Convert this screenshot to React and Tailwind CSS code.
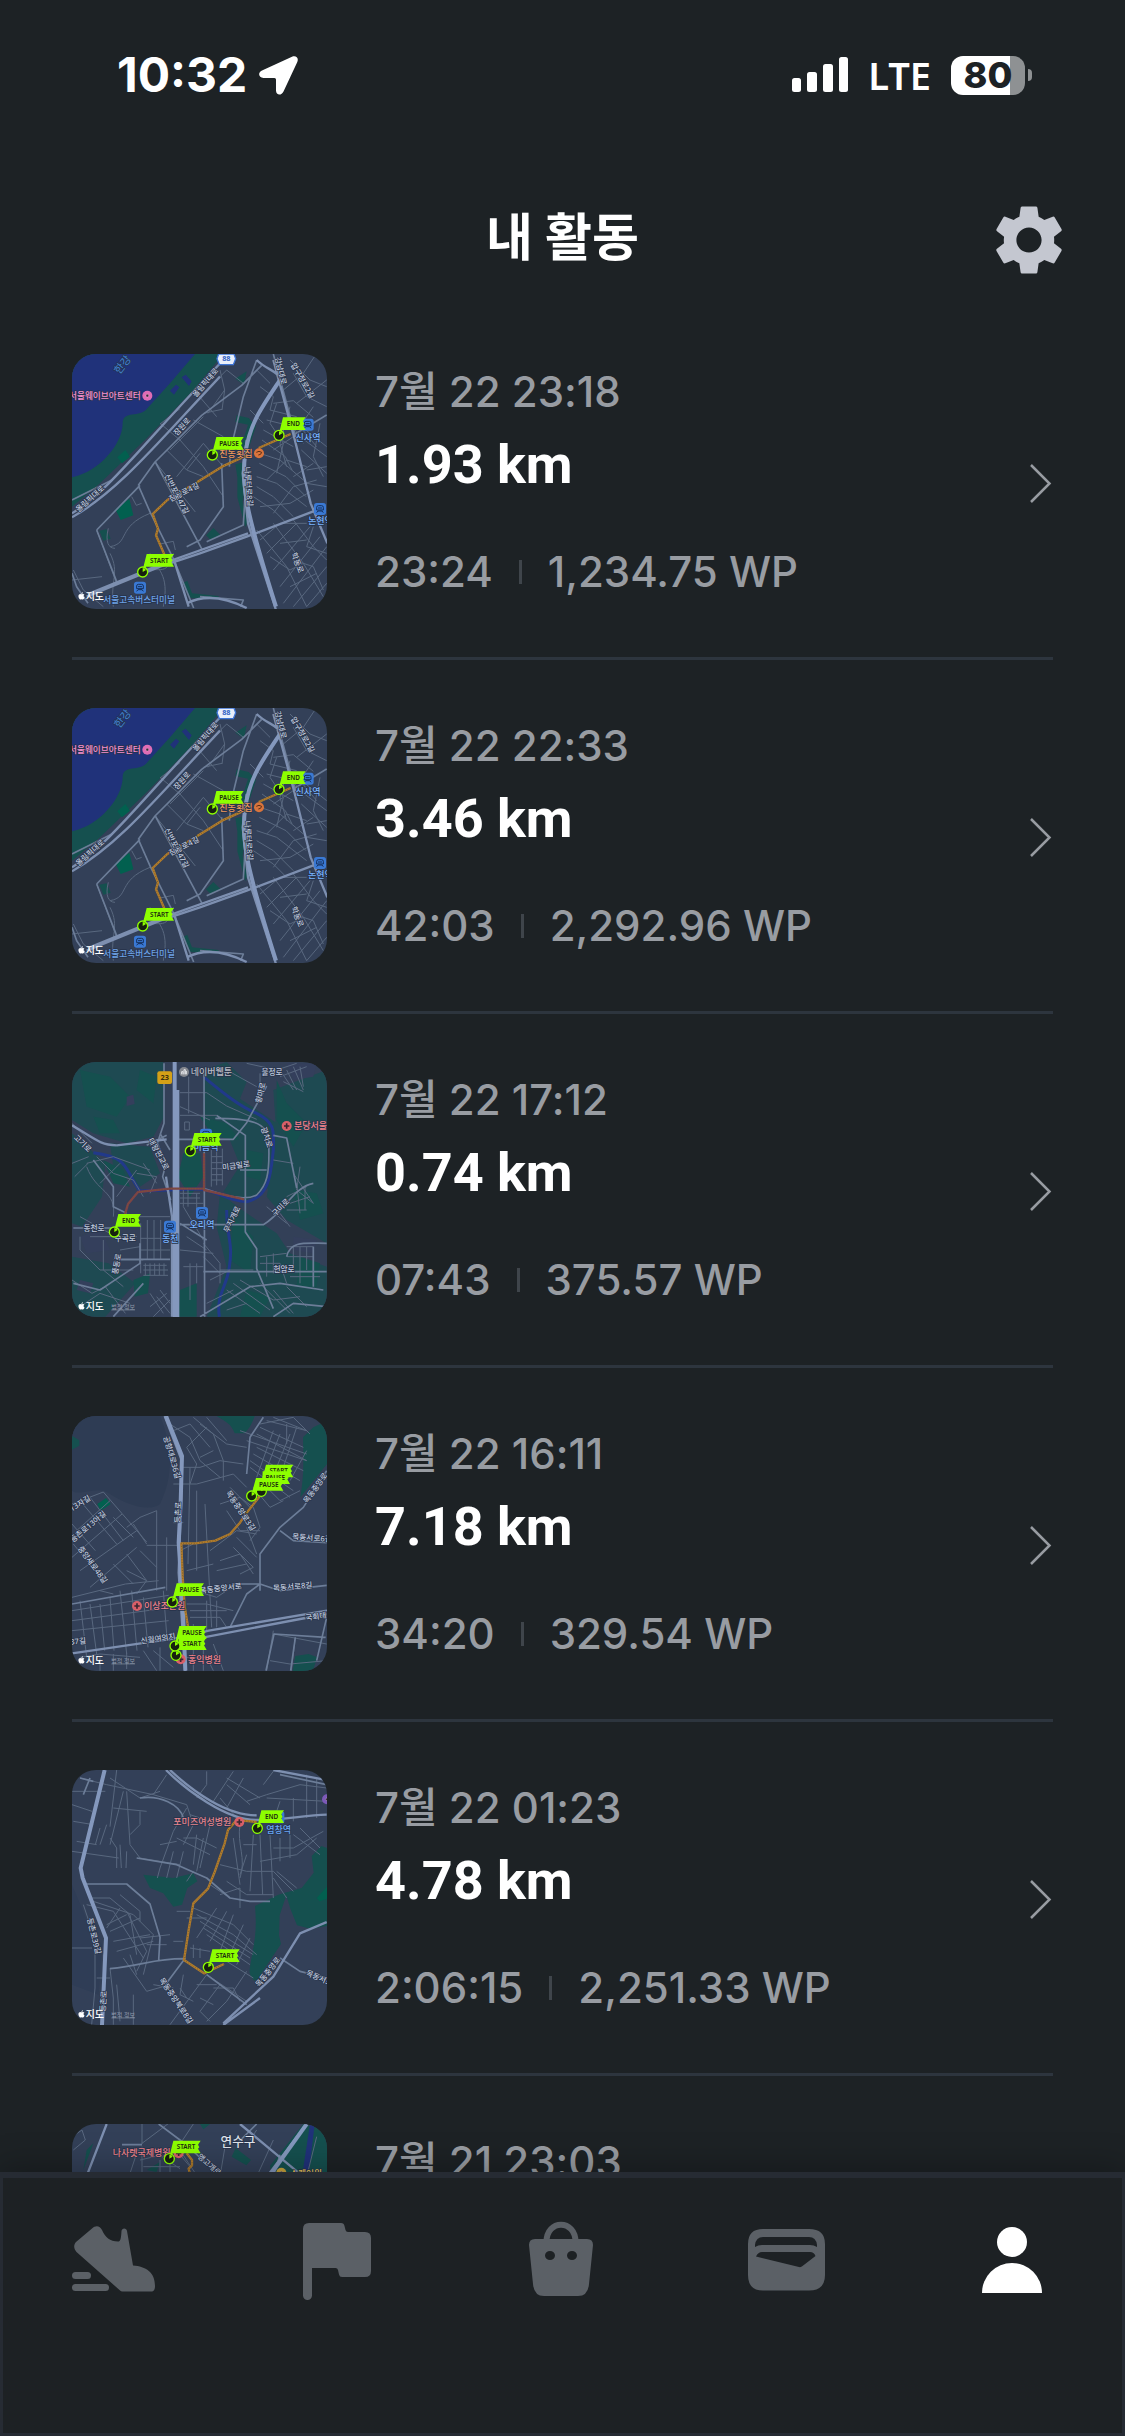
import { FaApple } from "react-icons/fa";
import { MdSettings } from "react-icons/md";

const PARK = "#15504f";
const PARK_BRIGHT = "#02604f";
const WATER = "#20327a";

// Map thumbnails, drawn on a 765 unit square. Flags are [x, y, label] of the pin.
const GANGNAM = {
  box: "36 42 765 765",
  areas: [
    { fill: PARK, d: "M36 42H490L400 150L260 295L120 430L36 500Z" },
    { fill: WATER, d: "M36 42H405L330 130L262 205C240 235 188 210 188 250C188 310 120 395 36 412Z" },
    { fill: WATER, d: "M330 152l18-18 10 8-16 22zM365 112l12-8 18 20-8 14z" },
    { fill: PARK_BRIGHT, d: "M172 352l24-22 14 20-24 20zM166 508l42-32 12 50-38 14z" },
    { fill: PARK, d: "M526 116l34-22-8 40zM530 226l36 8 22 24-22 68-22-8 20-64-38-8zM490 380l66-14v60l-8 60 14 60-6 16-24-90v-60l-6-40zM118 572l22-4 12 28-22 6zM438 586l22-22 22 22-30 14zM368 730l14-8 14 38 80 8v10l-84-4z" },
  ],
  minor:
    "M300 250l60 50 70 80 60 90M360 206l-60 46M410 160l60 70M480 90l14 60-50 70M494 150l-8 60M430 220l56-12M360 300l70-70M330 330l60-60M286 366l120 150M320 330l60 60 40-50M380 390l50 20M350 410l80-100 60 70M400 240l90 50M110 570l60 160M150 620c60-10 20-60 120-100M165 625c-20 0-30-20-20-60M300 612l40-8 6 26M215 470l14 26 16-6M470 120l30-30 50 40M250 700c40-30 70 20 90-60M40 690l30 60 60 50M36 720l90-10M150 640c30 60 0 80 10 160M270 640c20 50 60 60 40 160" +
    "M640 190l60-8 60 50M630 210l80 20M620 240l80 20 30 50M610 270l90 50M606 300l70 50 20 40M600 340l60 20 70 60M598 370l80 40 60 60M590 410l60 20 90 70M590 440l50 30 60 60M580 470l60 40 40 40M690 60l60 60 50 20M700 100l40 70 60 30M670 150l60-50 40-60M710 190l90-70M700 240l100 80M720 290l80 60M724 330l76 70M650 190l-20 60 40 60-20 90M690 200l-30 110 20 70M640 330l60-40M620 420l60-60 60 20M640 520l60-80 70-20M600 500l90-10 70-40M760 200l-40 60 50 60M780 250l-20 100 30 60M740 390l60-10M740 430l60 10M700 410l60-40" +
    "M600 600l60-50 80 0M620 640l90-90M640 690l110-130M660 740l120-150M670 790l130-170M700 800l100-120M740 800l60-70M590 570l90 110 60 120M640 550l90 120 60 100M700 540l60 80 40 40M660 610l80-10M630 650l60 40 40-20M700 660l60 20 30 70M600 140l40 30-10 40M590 90l40 40M570 210l40 40M760 560l-20 60 60 20M690 740l80-40",
  mid: "M590 60l-40 110-36 150-6 60M485 370l5 130-70 100-40 20M286 366l140 262M36 480l120-60M110 570l130-134M235 436l50-70 140-140 120-90 60-60M235 436l36 82 70 140 60 146M170 725l-60-155M36 700l14 40 34 50M440 605l110-50 10-170M420 770l130 10-8 20M640 42l70 260M700 285l100-60",
  major: "M36 520C150 450 240 320 490 60M36 532C180 450 300 300 480 110M80 770L300 680L420 640L560 590L760 514M84 762l220-90 260-92M342 660l44 140M380 790c60-30 120-16 180 14M560 300l-12 100 16 150 84 260M640 60l62 230 50 200 50 120M590 60c30 30 60 30 76 60",
  trunk: "M660 120c-60 90-90 130-104 220-16 100 10 200 92 460",
  route: "M692 282l-96 42M560 346l-74 34-80 50-84 50-44 42 16 44-6 20 26 60",
  flags: [[248, 696, "START"], [457, 345, "PAUSE"], [657, 286, "END"]],
  roads: [
    [436, 128, -50, "올림픽대로"], [90, 476, -42, "올림픽대로"], [366, 260, -48, "잠원로"], [372, 456, -27, "잠원로4길"],
    [350, 462, 62, "신반포로47길"], [566, 440, 86, "나루터로8길"], [662, 92, 76, "강남대로"], [728, 122, 60, "압구정로2길"], [712, 668, 68, "학동로"],
  ],
  places: [
    [242, 176, "서울웨이브아트센터", "#f48fd0", 26, "end"], [478, 350, "진동횟집", "#ef995c", 27, "start"],
    [130, 788, "서울고속버스터미널", "#6ea2e6", 26, "start"], [744, 302, "신사역", "#79b4ff", 27, "middle"], [744, 553, "논현역", "#79b4ff", 27, "start"],
    [190, 84, "한강", "#3c7ac9", 32, "middle"],
  ],
  dots: [[262, 167, "#e06db5", "o"], [597, 340, "#d9743c", "~"]],
  stations: [[743, 254], [780, 507], [240, 743]],
  shield: [499, 56, "88"],
};

const BUNDANG = {
  box: "36 36 765 765",
  areas: [
    { fill: "#1e4a52", d: "M36 36H310L312 200L280 260L200 280L100 250L36 210ZM36 250l100 90-10 100-60 90-30-10ZM500 36l60 60-20 50 120 80-20 180-90 50-60-30 50-80-40-100-70-30V60ZM640 120l160-60v520l-120-70-60-70 30-170ZM480 430l80 60 90 60 40 60 110 40v150H440l60-150-30-120ZM36 620l110 20 80 60-90 100H36ZM150 280l120 10 30 80-60 40-80-60Z" },
    { fill: PARK, d: "M60 60l90 20 60 60-40 60-90-30zM370 310l50 0 10 70-40 60-36-60zM360 720l50-20v100h-54zM220 690l50-20-6 60-40 10zM650 90l30 70 60 60-40 70-50-80zM520 500l60 60-10 110-60-40zM720 620l60 20-10 70-60 0zM560 720l70 20-30 60h-60zM130 330l60 30 20 50-50-10zM420 200l80 20 40 50-80-10zM100 200l60 10 20 40-60 0zM700 420l70 10 20 60-70 20zM240 60l50 20-10 80-50-40zM560 300l50 10-10 80-40-10z" },
    { fill: "#343f5c", d: "M680 40h90l-10 40-60 10zM200 140l20-6 4 28-24 6zM60 560l60-20 30 60-70 10zM700 560l70 10-10 40-60-10zM60 690l40 10-10 30-40-10z" },
  ],
  rivers: "M430 80c60 50 110 90 160 110 60 30 50 60 50 110-8 70-10 140-80 155-70-5-100-40-150-38l-170 6c-50-70-30-100-140-115M500 480c0 80 20 100 8 170-6 60-40 80-30 150",
  minor:
    "M80 340l80-20 110 40M110 320l50 50 60 20 30 50M80 350c30 80 90 70 80 150M120 400l60-60M170 440l60-80M230 370l60 10-20 50M250 340l40 60M60 560l0 40 60 60 100 0M90 560h140M130 570v90l60 50M180 600l60-10M160 630l90 0M60 500l90 50M44 380l40-40M36 340l50-20" +
    "M360 128h80l60 40 90 40M360 196h110M374 216h14v24h-14zM386 80v110M360 170l90 40M454 300v110M470 300v106M487 296v110M454 320h34M454 338h34M454 356h34M454 374h34M454 390h34M360 430h60M360 444h60M370 420v50l60 100M384 420v50M410 430v60M360 460h70" +
    "M240 500h90M242 520v150M262 510v120M282 510v120M302 510v120M240 565h90M240 600h90M250 646h70M256 640v36M270 640v36M284 640v36M298 640v36M312 640v36M250 660h74M250 676h74M36 690l60 40 40-20 60 80M60 770l60-40 90 30M270 770l50-40M280 800l50-50M290 740l40 50M270 730l40 60M300 720l30 40" +
    "M660 80l80-30M670 95l60 30M680 60l30 60M700 50l30 70M720 50l10 60M660 60l40 60M36 220l60 60M500 60l90 50M560 40l90 20 60-20M600 70v60" +
    "M700 370l60 90M720 350l-10 70 50 40M680 440l60-30M690 460l60-20M680 480l60 0M710 400l10 90M735 410l0 70M640 330l60 10M620 470l60 50M660 490l30 40M680 590h80v110M700 590v60M720 590v110M680 620h80M690 680h90M740 590v70M600 620l80-10M600 640l60 0 20 60M620 620v60M640 610v60" +
    "M500 720l100 70M520 700l110 80M540 690l100 60 80-10M600 700l90 90M640 720l60 70M680 710l60 60M480 660h100M430 580l50 60 0 60M380 560l60 40M360 600l100 10M370 650h60M390 640v110M410 640v60M450 690l60-30M430 620l50 50M440 760l80-40M500 780l60-20",
  mid: "M312 40v180l-20 60 26 60-10 40 24 70M432 60l2 740M350 268h170l40-50 60-110M470 196l86 60v290l34 50v60l50 120M320 256l-60 30M300 250l30 50M430 415c60 20 120 40 160 20 30-30 40-60 36-160 0-60-60-70-160-70M640 256l40 8 30 150M760 400c-60 10-90 90-150 124H360M360 520l80 50M540 360h80M40 534h120M100 330l60 80v60l40 20M40 700l80 20 60-40 60-40 0-60M180 628h150M430 665h370M160 800l90-100M420 800l150-90 90-10 130 20M640 800l60-40 100 10M680 620c10-50 60-40 120-40M760 590v120",
  major: "M36 226C110 270 120 284 170 286M170 286l150-18M318 380l18 120v300",
  trunk: "M344 36v765M352 120v681",
  routeColor: "#7d4048",
  route: "M432 310v110l120 28M432 416H330l-96 10-30 36-10 34",
  flags: [[391, 303, "START"], [163, 546, "END"]],
  roads: [
    [636, 68, 0, "불정로"], [602, 128, -76, "황마로"], [620, 262, 72, "광치로"], [68, 280, 44, "고기로"], [296, 312, 62, "대왕판교로"], [528, 347, -8, "미금일로"],
    [662, 472, -45, "구미로"], [516, 508, -64, "무지개로"], [102, 534, 0, "동천로"], [196, 564, 0, "수곡로"], [170, 642, -80, "풍동로"], [672, 658, 0, "헌암로"],
  ],
  places: [
    [392, 75, "네이버웹툰", "#b8bbc4", 27, "start"], [702, 238, "분당서울대병원", "#f0838a", 27, "start"], [438, 300, "미금역", "#79b4ff", 27, "middle"],
    [426, 534, "오리역", "#79b4ff", 27, "middle"], [331, 576, "동천", "#79b4ff", 27, "middle"],
  ],
  dots: [[372, 66, "#85888f", "n"], [680, 228, "#d85f68", "+"]],
  stations: [[438, 254], [426, 489], [330, 530]],
  sign: [314, 82, "23"],
  legal: true,
};

const MOKDONG = {
  box: "36 36 765 765",
  areas: [
    { fill: "#2e3c54", d: "M36 36H300C340 130 340 220 300 300C260 330 180 290 150 270C110 240 60 280 36 260Z" },
    { fill: PARK, d: "M470 36h114c-10 30-20 40-30 52h-30c-10-30-30-36-54-52zM760 70l41-20v130l-80 100c10-60 10-100 8-180zM36 95l22 14v16l-22 12zM706 756l40-6 26 10-14 41h-60z" },
    { fill: PARK_BRIGHT, d: "M112 300l26-18 14 18-30 20z" },
  ],
  minor:
    "M36 300l94-36 130 150M50 380l100-90M36 460l150-130M60 500l170-120M90 550l140-120M60 290l110 130M90 280l100 130M36 360l70 80M40 420l90 110M120 560l40 10M160 480l60 60M200 450l60 80M240 440l50 50M160 340l60 60M200 370l40-30 50-20M36 580l160-40 100-10M220 360l40 60M36 620l290-46M36 650l300-40M36 680l290-30M60 590l20 170M90 600l20 150M120 600l14 140M150 580l12 160M180 560l20 190M215 560l16 180M250 580l14 150M290 320v240M320 400v160M260 424h100M310 560l10 130M200 500l60 30-30 40" +
    "M340 80l50-20 60 70M330 60l60 40 30 70 60 50M380 130l60-60M380 130l30 50-20 60M420 160l40-20M400 40l60 50 30 80v60M440 40l60 70M420 60l80 60 60 10M360 190h60l60-20 70 10M340 240l70 0 110-30 40 40M410 260v240M435 300l20 370M390 190l-6 290M340 356h30M360 440l40-20M480 300l60-20 40 30 20 60-30 40M500 320l40 60 60 0M510 250l60 60M520 430l60 60-40 20M450 440l80-60 60 10M480 470l60-20 40 60M530 400l60 60M560 370l30 80M470 500l90-20M380 500l80-20M370 550l100 30 60-40" +
    "M560 110l180 60M540 80l200 70M590 90l150 80M600 70l130 60M590 130l140 70M580 150l140 80M570 170l130 90M570 190l120 90M600 60l100-20 50 50M620 50l120 30M640 40l100 40M680 60v60M710 70l-60 180M690 90l-60 150M660 90l-50 130M640 80l-50 140M740 140l-50 90M580 250l50 60 40-20M600 230l60 60 60-30" +
    "M380 600l60 0 80 20M390 620h110M390 640l90 0 20 30M400 660v30M440 590v90M470 590v80M380 760l60 0 20 40M400 720v80M430 720v80M460 720l30 80M250 740l40 60M60 760l60-10 120 10M280 740l60 50M300 730v70M160 750v50M200 745v50M120 760v40M640 680l-20 120M706 700l-12 100M640 690l160 30M630 770l60 10 110-10",
  mid: "M610 40l-40 60-10 110M600 560v-110l60-80 70-60 70-110M600 540l-40 30-30 60-20 40M660 380l40 30 100 6M520 540h80l60 20 140-16M618 800l24-110 155 10M706 700l-14 100M800 640l-30 130M36 600l280-50",
  major: "M314 36l50 130v100l-8 240 20 295M36 748l330-48 80-20 355-60M400 706l400-76",
  trunk: "M318 36l48 120-4 140-6 120 12 180 8 204",
  route: "M600 276l-40 50-20 30-30 34-44 20-60 8-42 0 4 100 6 90 10 60",
  flags: [[600, 256, "START"], [604, 262, "PAUSE"], [575, 276, "PAUSE"], [337, 594, "PAUSE"], [348, 754, "START"], [345, 726, "PAUSE"]],
  flagTops: [[612, 182], [602, 202], [582, 222], [344, 538], [352, 700], [352, 666]],
  roads: [
    [336, 160, 74, "공항대로36길"], [354, 325, -88, "등촌로"], [542, 320, 56, "목동중앙로3길"], [766, 252, -54, "목동중앙로"], [756, 402, 4, "목동서로6길"], [698, 548, -5, "목동서로8길"],
    [482, 553, -7, "목동중앙서로"], [778, 636, -8, "국회대로"], [60, 298, -32, "13자길"], [84, 368, -40, "등촌로13아길"], [98, 482, 54, "중앙새로48길"], [294, 704, -8, "신월여의지"], [54, 712, -6, "37길"],
  ],
  places: [[252, 616, "이상조은원", "#f0838a", 27, "start"], [384, 776, "홍익병원", "#f0838a", 27, "start"]],
  dots: [[231, 606, "#d85f68", "+"], [362, 766, "#d85f68", "+"]],
  stations: [],
  legal: true,
};

const YEOMCHANG = {
  box: "36 36 765 765",
  areas: [
    { fill: PARK, d: "M250 350l90 10 60-14 12 24-30 20-16 50-26 6-30-40-40-16zM784 264l17 6v234l-50 8-40-10-20-50-12-40-20 60-2 60 6 26-40 60-30 46-10 4c-10-10-16-20-14-34 10-70 24-100 16-190l70-34 70-20 36-46-6-50z" },
    { fill: PARK_BRIGHT, d: "M770 420l31-34v36l-22 8z" },
    { fill: "#2f3d56", d: "M36 380l50 120 40 60-10 150-80-30z" },
  ],
  minor:
    "M36 100h100M60 60l80 20 140 30 40-60M36 140l60 20M40 190l60 10M50 250l60 10M36 280l140 20M150 60l90 60 60-20M170 36l-20 170M190 100l-40 160M160 150l100 10M140 200l-20 60M120 210l-14 50M200 100l10 160 30 40 120 20M240 160v40l-30 30M150 240l20 30 0 60M180 260l4 70M200 280l-2 50M280 110l100 30 20 60-30 60M380 150l-40 70-40 110M390 170l90 30M370 240l40 0 60 30M300 260l50-10M350 240l100 50M410 230l-10 90M430 240l-20 100M450 200l-30 130M340 280l-20 80M370 280l-20 80M400 340l-20 30M300 330l-8 30" +
    "M440 40v40l-30 40M480 120l50 60M500 80l70 60M520 40l-60 90M550 60l-50 90M500 60l100 60M560 130l60-20 100-30 80 10M640 40l-30 40M620 120l180 10M660 130l-20 60M700 120v70M740 50v130M770 60v120M600 230l8 180M630 230l10 190M580 230l-10 170M640 270h60l90-50M660 240v70M690 230l0 70M550 260h40M540 200c-10 60 20 100 0 160M560 290l-20 60M520 240l20 140M480 320l80 20 80 0 60 60M500 370l60 40 80 0M640 360l40 60M650 340l60 50M600 310l110-20 60-50M480 410l60-20 0 60M700 230l80 60M720 210l60 60M450 380l60 40" +
    "M90 420l60 0 60 50 20 120M80 440l80 20 90 140M70 440l20 60M100 430l120 40 60 60-30 120M180 450l-40 60M140 500l60-30M150 520l90-40M160 550l110-20M170 580l110-30M200 460l60 120-30 60M180 410l60 50 0 30M240 540l90-10M260 560l60 0M280 680l60 10M260 700l70-20M190 600l70 100M210 590l20 60M105 560v130l-10 110M150 630l10 90v80M130 590v60M36 570h60M110 660h40M170 680l10 110M220 710v90" +
    "M400 450l120 50 60 60M410 470l110 60 70 60M420 490l160 100M430 510l140 90M440 530l130 90M440 480l-60 0M520 470l-40 110M550 500l-50 110M500 460l-50 90M570 540l-40 80M470 450l-60 90M500 610l80 50M390 570l60 10M400 560v40M420 570v30M350 460h40M340 550h30M440 650l-110 150M440 650l120 80M480 680l-60 80 30 30M460 690l60 0 20 40M410 680l60 0M420 720l40 20M360 690l20 30M370 650l-10 60 40 20M560 640l-60 90-60 60",
  mid: "M240 120c60-10 120 20 130 60M60 60L100 70M80 378h120l70 60 30 100-4 70M150 632c100-10 130-30 220-30M440 650l120 90M316 680l60-80M230 300l120 20 90 40 70 60 60 10h60M660 600l60 40 80 20M660 50l140 30M90 60l-20 50",
  major: "M600 720l-110 81M490 796l150-140 80-130 80-34M318 36c60 60 180 150 270 150 90 0 140-14 212-16M330 36c70 66 170 136 260 136M640 36l160 30",
  trunk: "M134 36L62 330l6 30 70 180-12 261",
  route: "M590 192l-60-6-26 30-10 40-30 86-20 50-44 44-14 80-14 90 60 40 60-28",
  flags: [[592, 211, "END"], [445, 628, "START"]],
  roads: [[102, 534, 76, "등촌로39길"], [348, 728, 56, "목동중앙북로8길"], [624, 642, -52, "목동중앙로"], [778, 660, 24, "목동서로"], [130, 730, -86, "등촌로"]],
  places: [[340, 202, "포미즈여성병원", "#e6858d", 27, "start"], [656, 226, "염창역", "#6aa6f5", 27, "middle"]],
  dots: [[538, 192, "#d85f68", "+"], [801, 124, "#7c59b8", "o"]],
  stations: [[655, 178]],
  legal: true,
};

const YEONSU = {
  box: "36 42 765 765",
  areas: [
    { fill: PARK, d: "M730 42l71 20v745H620l20-580-10-60zM420 42h30l-20 16zM515 140l12-26 46 36-14 16zM80 120l20-20-30 80zM260 180l40-24-10 30z" },
    { fill: WATER, d: "M750 42h14l-20 170h-20z" },
  ],
  minor:
    "M36 80l30-20 10 30-36 30M246 42v60M246 100l80-60 40 0M186 104h60M190 120h50M246 110v90M230 130l-20 60 40 10M240 150l60-14 60 40M250 170h110M240 190h140M340 110l50 60M400 42l-40 60-20 40M300 150v60M330 150v60M500 80l-20 120M590 60l-20 30M640 90l-50 110M770 80l-40 160M366 130l40 60",
  mid: "M296 42l80 60 130 120M590 42l-60 60M186 104l60 0M660 134l-20 66",
  major: "M140 42L60 250M540 42l180 150M740 42L560 280",
  trunk: "M740 42L570 280",
  route: "M380 130l16 20 0 16-10 10 10 40",
  flags: [[328, 146, "START"]],
  roads: [[448, 164, 42, "앵고개로"]],
  places: [
    [158, 138, "나사렛국제병원", "#f0838a", 27, "start"], [534, 108, "연수구", "#dfe3ea", 38, "middle"], [690, 200, "스퀘어원", "#f0c75a", 26, "start"],
  ],
  dots: [[356, 130, "#d85f68", "+"], [664, 188, "#c9a33c", "o"]],
  stations: [],
};

const ACTIVITIES = [
  { date: "7월 22 23:18", distance: "1.93 km", time: "23:24", reward: "1,234.75 WP", map: GANGNAM },
  { date: "7월 22 22:33", distance: "3.46 km", time: "42:03", reward: "2,292.96 WP", map: GANGNAM },
  { date: "7월 22 17:12", distance: "0.74 km", time: "07:43", reward: "375.57 WP", map: BUNDANG },
  { date: "7월 22 16:11", distance: "7.18 km", time: "34:20", reward: "329.54 WP", map: MOKDONG },
  { date: "7월 22 01:23", distance: "4.78 km", time: "2:06:15", reward: "2,251.33 WP", map: YEOMCHANG },
  { date: "7월 21 23:03", map: YEONSU },
];

function MapFlag({ x, y, label, top }) {
  const w = label === "END" ? 74 : 88;
  const [left, flagTop] = top || [x + 6, y - 54];
  return (
    <g>
      <circle cx={x} cy={y} r="15" fill="#17210f" stroke="#8dff00" strokeWidth="4" />
      <path d={`M${x} ${y}V${y - 12}A12 12 0 0 1 ${x + 10} ${y - 6}Z`} fill="#8dff00" />
      <path
        d={`M${left + 6} ${flagTop}H${left + w}l-8 12 4 8-4 4 8 14H${left + 4}L${x + 8} ${y - 8}L${x + 2} ${y - 14}Z`}
        fill="#8dff00"
      />
      <text x={left + w / 2} y={flagTop + 26} textAnchor="middle" className="fill-[#1c2b10] text-[19px] font-semibold">
        {label}
      </text>
    </g>
  );
}

function MapThumb({ map }) {
  return (
    <svg
      viewBox={map.box}
      aria-hidden="true"
      className="size-[255px] shrink-0 rounded-3xl bg-[#334058] font-['Noto_Sans','Noto_Sans_CJK_KR',sans-serif]"
    >
      {map.areas.map((area) => (
        <path key={area.d} d={area.d} fill={area.fill} />
      ))}
      <g fill="none" strokeLinejoin="round">
        {map.rivers && <path d={map.rivers} stroke="#21398a" strokeWidth="9" />}
        <path d={map.minor} stroke="#59687f" strokeWidth="3" />
        <path d={map.mid} stroke="#6c7d98" strokeWidth="5" />
        <path d={map.major} stroke="#7d8fb0" strokeWidth="7" />
        <path d={map.trunk} stroke="#8498bd" strokeWidth="12" />
        <path d={map.route} stroke={map.routeColor || "#b37c2b"} strokeWidth="7" />
        <path d={map.route} stroke="#77602f" strokeWidth="3" strokeDasharray="3 5" />
      </g>
      <g stroke="#26324a" strokeWidth="4" paintOrder="stroke">
        {map.roads.map(([x, y, angle, name]) => (
          <text
            key={name + x}
            textAnchor="middle"
            transform={`translate(${x} ${y}) rotate(${angle})`}
            dy="8"
            className="fill-[#c0cadd] text-[23px] font-medium"
          >
            {name}
          </text>
        ))}
        {map.places.map(([x, y, name, color, size, anchor]) => (
          <text
            key={name}
            x={x}
            y={y}
            fill={color}
            fontSize={size}
            textAnchor={anchor}
            transform={name === "한강" ? `rotate(-52 ${x} ${y - 8})` : undefined}
            className="font-medium"
          >
            {name}
          </text>
        ))}
      </g>
      {map.dots.map(([x, y, color, mark]) => (
        <g key={`${x}-${y}`}>
          <circle cx={x} cy={y} r="15" fill={color} />
          {mark === "+" && <path d={`M${x - 8} ${y}h16M${x} ${y - 8}v16`} stroke="#3a2630" strokeWidth="5" />}
          {mark === "o" && <circle cx={x} cy={y} r="4" fill="#3c2338" stroke="#ffffff66" strokeWidth="2" />}
          {mark === "~" && <path d={`M${x - 8} ${y - 3}q8-6 16 0q-2 8-10 8`} fill="none" stroke="#5a2e18" strokeWidth="3" />}
          {mark === "n" && <path d={`M${x - 7} ${y + 7}v-8h4v8m3 0v-14h4v14m3 0v-10`} fill="none" stroke="#e5e7eb" strokeWidth="3" />}
        </g>
      ))}
      {map.stations.map(([x, y]) => (
        <g key={`${x}-${y}`}>
          <rect x={x - 18} y={y - 18} width="36" height="36" rx="8" fill="#3a79d4" />
          <path
            d={`M${x - 10} ${y + 11}l4-5h12l4 5M${x - 10} ${y + 3}v-8q0-5 5-5h10q5 0 5 5v8zM${x - 6} ${y - 3}h12`}
            fill="none"
            stroke="#14305e"
            strokeWidth="3"
          />
        </g>
      ))}
      {map.shield && (
        <g>
          <path d="M476 42h46l5 14-7 18h-42l-7-18z" fill="#e8eefb" stroke="#3d74d6" strokeWidth="4" />
          <text x={map.shield[0]} y="64" textAnchor="middle" className="fill-[#2f5fc4] text-[22px] font-bold">
            {map.shield[2]}
          </text>
        </g>
      )}
      {map.sign && (
        <g>
          <rect x="292" y="64" width="44" height="38" rx="6" fill="#d4a017" />
          <text x="314" y="91" textAnchor="middle" className="fill-[#3a2f10] text-[22px] font-bold">
            {map.sign[2]}
          </text>
        </g>
      )}
      {map.flags.map(([x, y, label], i) => (
        <MapFlag key={`${x}-${y}`} x={x} y={y} label={label} top={map.flagTops?.[i]} />
      ))}
      <FaApple x="52" y="755" size="25" color="#ffffff" />
      <text x="77" y="779" className="fill-white text-[30px] font-medium">지도</text>
      {map.legal && (
        <text x="154" y="776" className="fill-[#8f99ab] text-[18px] underline">법적 정보</text>
      )}
    </svg>
  );
}

function ActivityRow({ activity }) {
  return (
    <li className="border-b-3 border-[#2d353e]">
      <a href="#activity" className="flex items-center gap-12 py-12">
        <MapThumb map={activity.map} />
        <div className="flex h-[255px] flex-1 flex-col pt-3.5 font-medium text-[#989ca2]">
          <p className="text-[42px] leading-[48px]">{activity.date}</p>
          <p className="mt-4 font-['Roboto',sans-serif] text-[54px] leading-[66px] font-bold text-white">{activity.distance}</p>
          {activity.time && (
            <div className="mt-[50px] flex items-center gap-[26px] text-[42px] leading-[48px]">
              <span>{activity.time}</span>
              <span className="h-6 w-[3px] bg-[#3f454b]" />
              <span>{activity.reward}</span>
            </div>
          )}
        </div>
        <svg viewBox="0 0 24 42" className="h-[42px] w-6 shrink-0" fill="none" stroke="#989ca2" strokeWidth="2.5">
          <path d="M2 4l18.500 18.500L2 41" />
        </svg>
      </a>
    </li>
  );
}

function StatusBar() {
  return (
    <div className="flex h-[150px] shrink-0 items-center justify-between pr-[93px] pl-[117px] text-white">
      <div className="flex items-center gap-3">
        <span className="text-[48px] leading-[56px] font-bold">10:32</span>
        <svg viewBox="0 0 39 39" className="size-[39px]" fill="currentColor">
          <path d="M33 .8C37 -.8 40 2 38.300 6L24.500 35.500C22.500 40 17 39.500 17 34.500V23.500Q17 22 15.500 22H4.500C-.5 22-1.500 16.500 3 14.500Z" />
        </svg>
      </div>
      <div className="flex items-center gap-5">
        <svg viewBox="0 0 56 36" className="h-9 w-14" fill="currentColor">
          <rect x="0" y="21" width="9" height="14" rx="2.500" />
          <rect x="15" y="15" width="10" height="20" rx="2.500" />
          <rect x="31" y="7" width="10" height="28" rx="2.500" />
          <rect x="47" y="0" width="9" height="35" rx="2.500" />
        </svg>
        <span className="font-['Noto_Sans',sans-serif] text-[38px] leading-[48px] font-semibold">LTE</span>
        <div className="flex items-center gap-[3px]">
          <div className="flex h-[39px] w-[74px] items-center justify-center rounded-xl bg-linear-to-r from-white from-80% to-[#8e9193] to-80% text-[36px] leading-[39px] font-extrabold text-[#1d2225]">
            80
          </div>
          <span className="h-3 w-1 rounded-r-full bg-[#8e9193]" />
        </div>
      </div>
    </div>
  );
}

const TABS = [
  {
    label: "걷기",
    icon: (
      <g transform="translate(2 0)">
        <path d="M4 28L20 14.500C23.500 11 28 11.500 30 16C33 23 38 27.500 46 27.500C48.500 27.500 49 25 49.500 17C49.800 13.500 54.700 13.500 55 17L61 51.500C74 52.500 83 58 83 72C83 75.500 82 77.500 79 77.500H50.500Q49 77.500 47.500 76L4.500 38C1.500 34.500 1.500 31 4 28Z" />
        <rect x="0" y="58" width="19" height="7" rx="3.500" />
        <rect x="0" y="70" width="37" height="7" rx="3.500" />
      </g>
    ),
  },
  {
    label: "챌린지",
    icon: (
      <path d="M9 15Q9 9 15 9H47Q50 9 50.500 12L51.500 16Q52 18 54 18H71Q77 18 77 24V57Q77 63 71 63H48Q45.500 63 45 60.500L44 56Q43.500 54 41.500 54H18V81.500A4.500 4.500 0 0 1 9 81.500Z" />
    ),
  },
  {
    label: "상점",
    icon: (
      <g transform="translate(-1 0)">
        <path d="M30.500 28C30.500 5 59.500 5 59.500 28" fill="none" stroke="currentColor" strokeWidth="6" />
        <path
          fillRule="evenodd"
          d="M19 25H71Q77 25 77 31L73 70Q72 82 62 82H28Q18 82 17 70L13 31Q13 25 19 25ZM34 37A5 4.500 0 1 0 34 46A5 4.500 0 1 0 34 37ZM56 37A5 4.500 0 1 0 56 46A5 4.500 0 1 0 56 37Z"
        />
      </g>
    ),
  },
  {
    label: "지갑",
    icon: (
      <path
        fillRule="evenodd"
        d="M22 15H68Q84 15 84 30V61Q84 76.500 68 76.500H22Q7 76.500 7 61V30Q7 15 22 15ZM22 23Q15 23 14 31V33Q17 31 21 31H69Q73 31 76 33V31Q75 23 68 23ZM21 38Q17 38 15 42.500L58 53Q60 53.500 61.500 52L74.500 42Q73 38 69 38Z"
      />
    ),
  },
  {
    label: "내 정보",
    active: true,
    icon: (
      <>
        <circle cx="47" cy="28" r="15" />
        <path d="M17 79A30 30 0 0 1 77 79Z" />
      </>
    ),
  },
];

function TabBar() {
  return (
    <nav className="relative grid shrink-0 grid-cols-5 border-3 border-t-6 border-[#262b33] bg-[#1d2124] pt-9 pb-[129px] shadow-[0_-6px_30px_rgba(0,0,0,0.25)]">
      {TABS.map((tab) => (
        <button
          key={tab.label}
          type="button"
          aria-label={tab.label}
          className={tab.active ? "flex justify-center text-white" : "flex justify-center text-[#5b6066]"}
        >
          <svg viewBox="0 0 90 90" className="size-[90px] overflow-visible" fill="currentColor">
            {tab.icon}
          </svg>
        </button>
      ))}
    </nav>
  );
}

export default function App() {
  return (
    <div className="flex h-screen flex-col overflow-hidden bg-[#1d2225] font-['Inter','Noto_Sans_CJK_KR',sans-serif]">
      <StatusBar />

      {/* Title centred between an empty cell and the settings button */}
      <header className="grid h-[156px] shrink-0 grid-cols-[1fr_auto_1fr] items-start px-[54px] pt-12">
        <h1 className="col-start-2 pt-2.5 text-[51px] leading-[60px] font-bold text-white">내 활동</h1>
        <button type="button" aria-label="설정" className="flex justify-end text-[#c4c7d0]">
          <MdSettings size={84} />
        </button>
      </header>

      <main className="min-h-0 flex-1 overflow-hidden px-[72px]">
        <ul>
          {ACTIVITIES.map((activity) => (
            <ActivityRow key={activity.date} activity={activity} />
          ))}
        </ul>
      </main>

      <TabBar />
    </div>
  );
}
